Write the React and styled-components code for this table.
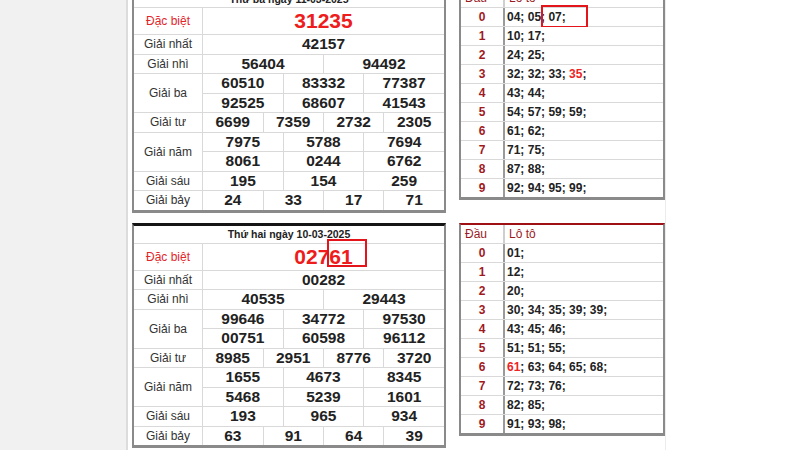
import React from "react";
import styled, { createGlobalStyle } from "styled-components";

const GlobalStyle = createGlobalStyle`
  body {
    margin: 0;
    background: #fff;
    font-family: "Liberation Sans", Arial, sans-serif;
  }
`;

const Page = styled.div`
  display: flex;
  height: 450px;
  overflow: hidden;
`;

const Sidebar = styled.div`
  width: 126px;
  flex-shrink: 0;
  background: #f1f1f1;
  border-right: 2px solid #dcdcdc;
`;

const Content = styled.div`
  width: 533px;
  padding-left: 4px;
  border-right: 1px solid #ececec;
  margin-top: -13px;
  display: flex;
  flex-direction: column;
  gap: 10px;
`;

const Block = styled.div`
  display: flex;
  align-items: flex-start;
  gap: 13px;
`;

const ResultTable = styled.div`
  width: 314px;
  box-sizing: border-box;
  display: grid;
  grid-template-columns: 68px repeat(12, 1fr);
  grid-template-rows: 17px 26px repeat(9, 18.5px);
  gap: 1px;
  background: #d9d9d9;
  border: 2px solid #8a8a8a;
  border-top: 3px solid #151515;
  border-bottom-width: 3px;
`;

const Cell = styled.div`
  position: relative;
  background: #fff;
  display: flex;
  align-items: center;
  justify-content: center;
  grid-column: span ${(p) => p.$span || 1};
  grid-row: span ${(p) => p.$rows || 1};
`;

const DateCell = styled(Cell)`
  font-size: 10.5px;
  font-weight: bold;
  color: #222;
`;

const Label = styled(Cell)`
  font-size: 12px;
  color: ${(p) => (p.$red ? "#e3262b" : "#333")};
`;

const Num = styled(Cell)`
  font-size: 15.5px;
  font-weight: bold;
  color: #222;
`;

const Special = styled(Cell)`
  font-size: 21px;
  font-weight: bold;
  color: #ee1c1c;
`;

const LotoTable = styled.div`
  width: 206px;
  box-sizing: border-box;
  display: grid;
  grid-template-columns: 44px 1fr;
  grid-auto-rows: 18px;
  row-gap: 1px;
  background: #d9d9d9;
  border: 2px solid #8a8a8a;
  border-top: 2px solid #9e1014;
  border-bottom-width: 3px;
`;

const Head = styled.div`
  background: #fff;
  display: flex;
  align-items: center;
  padding-left: 4px;
  font-size: 12px;
  color: #9a1b1f;
  border-right: ${(p) => (p.$first ? "2px solid #cfcfcf" : "none")};
`;

const Dau = styled.div`
  background: #fff;
  display: flex;
  align-items: center;
  justify-content: center;
  font-size: 12px;
  font-weight: bold;
  color: #9e1a1e;
  border-right: 2px solid #9a9a9a;
`;

const Loto = styled.div`
  position: relative;
  background: #fff;
  display: flex;
  align-items: center;
  padding-left: 2px;
  font-size: 12px;
  font-weight: bold;
  color: #222;
  white-space: pre;
`;

const Red = styled.span`
  color: #ec2424;
`;

const Highlight = styled.div`
  position: absolute;
  left: ${(p) => p.$left}px;
  top: ${(p) => p.$top}px;
  width: ${(p) => p.$w}px;
  height: ${(p) => p.$h}px;
  box-sizing: border-box;
  border: 2px solid #e3141a;
  pointer-events: none;
`;

const blocks = [
  {
    date: "Thứ ba ngày 11-03-2025",
    special: "31235",
    first: "42157",
    second: ["56404", "94492"],
    third: ["60510", "83332", "77387", "92525", "68607", "41543"],
    fourth: ["6699", "7359", "2732", "2305"],
    fifth: ["7975", "5788", "7694", "8061", "0244", "6762"],
    sixth: ["195", "154", "259"],
    seventh: ["24", "33", "17", "71"],
    loto: [
      ["04", "05", "07"],
      ["10", "17"],
      ["24", "25"],
      ["32", "32", "33", "35"],
      ["43", "44"],
      ["54", "57", "59", "59"],
      ["61", "62"],
      ["71", "75"],
      ["87", "88"],
      ["92", "94", "95", "99"],
    ],
    mark: { on: "loto", left: 36, top: -3, w: 47, h: 23 },
  },
  {
    date: "Thứ hai ngày 10-03-2025",
    special: "02761",
    first: "00282",
    second: ["40535", "29443"],
    third: ["99646", "34772", "97530", "00751", "60598", "96112"],
    fourth: ["8985", "2951", "8776", "3720"],
    fifth: ["1655", "4673", "8345", "5468", "5239", "1601"],
    sixth: ["193", "965", "934"],
    seventh: ["63", "91", "64", "39"],
    loto: [
      ["01"],
      ["12"],
      ["20"],
      ["30", "34", "35", "39", "39"],
      ["43", "45", "46"],
      ["51", "51", "55"],
      ["61", "63", "64", "65", "68"],
      ["72", "73", "76"],
      ["82", "85"],
      ["91", "93", "98"],
    ],
    mark: { on: "special", left: 124, top: -5, w: 40, h: 28 },
  },
];

const NumRow = ({ values, span }) =>
  values.map((v, i) => (
    <Num key={i} $span={span}>
      {v}
    </Num>
  ));

const Results = ({ b }) => (
  <ResultTable>
    <DateCell $span={13}>{b.date}</DateCell>
    <Label $red>Đặc biệt</Label>
    <Special $span={12}>
      {b.special}
      {b.mark.on === "special" && (
        <Highlight $left={b.mark.left} $top={b.mark.top} $w={b.mark.w} $h={b.mark.h} />
      )}
    </Special>
    <Label>Giải nhất</Label>
    <Num $span={12}>{b.first}</Num>
    <Label>Giải nhì</Label>
    <NumRow values={b.second} span={6} />
    <Label $rows={2}>Giải ba</Label>
    <NumRow values={b.third.slice(0, 3)} span={4} />
    <NumRow values={b.third.slice(3)} span={4} />
    <Label>Giải tư</Label>
    <NumRow values={b.fourth} span={3} />
    <Label $rows={2}>Giải năm</Label>
    <NumRow values={b.fifth.slice(0, 3)} span={4} />
    <NumRow values={b.fifth.slice(3)} span={4} />
    <Label>Giải sáu</Label>
    <NumRow values={b.sixth} span={4} />
    <Label>Giải bảy</Label>
    <NumRow values={b.seventh} span={3} />
  </ResultTable>
);

const LotoList = ({ b }) => {
  const hot = b.special.slice(-2);
  return (
    <LotoTable>
      <Head $first>Đầu</Head>
      <Head>Lô tô</Head>
      {b.loto.map((row, d) => (
        <React.Fragment key={d}>
          <Dau>{d}</Dau>
          <Loto>
            {row.map((n, i) => (
              <React.Fragment key={i}>
                {n === hot ? <Red>{n}</Red> : n}
                {i < row.length - 1 ? "; " : ";"}
              </React.Fragment>
            ))}
            {d === 0 && b.mark.on === "loto" && (
              <Highlight $left={b.mark.left} $top={b.mark.top} $w={b.mark.w} $h={b.mark.h} />
            )}
          </Loto>
        </React.Fragment>
      ))}
    </LotoTable>
  );
};

export default function App() {
  return (
    <>
      <GlobalStyle />
      <Page>
        <Sidebar />
        <Content>
          {blocks.map((b, i) => (
            <Block key={i}>
              <Results b={b} />
              <LotoList b={b} />
            </Block>
          ))}
        </Content>
      </Page>
    </>
  );
}
